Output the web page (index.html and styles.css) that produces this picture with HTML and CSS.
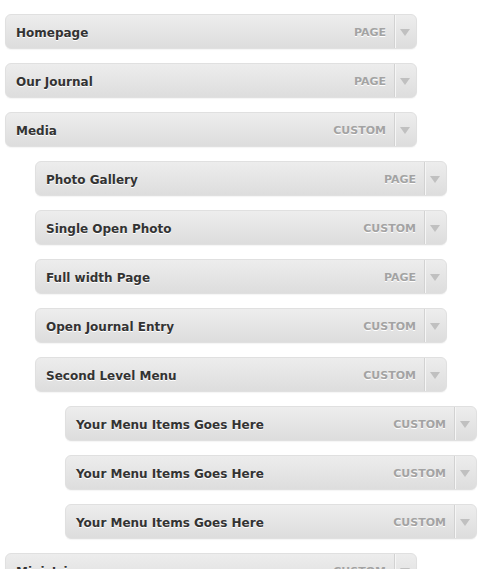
FILE: index.html
```html
<!DOCTYPE html>
<html>
<head>
<meta charset="utf-8">
<link rel="stylesheet" href="styles.css">
</head>
<body>
<ul class="menu">
  <li class="item d0"><span class="title">Homepage</span><span class="type">Page</span><span class="arrow"></span></li>
  <li class="item d0"><span class="title">Our Journal</span><span class="type">Page</span><span class="arrow"></span></li>
  <li class="item d0"><span class="title">Media</span><span class="type">Custom</span><span class="arrow"></span></li>
  <li class="item d1"><span class="title">Photo Gallery</span><span class="type">Page</span><span class="arrow"></span></li>
  <li class="item d1"><span class="title">Single Open Photo</span><span class="type">Custom</span><span class="arrow"></span></li>
  <li class="item d1"><span class="title">Full width Page</span><span class="type">Page</span><span class="arrow"></span></li>
  <li class="item d1"><span class="title">Open Journal Entry</span><span class="type">Custom</span><span class="arrow"></span></li>
  <li class="item d1"><span class="title">Second Level Menu</span><span class="type">Custom</span><span class="arrow"></span></li>
  <li class="item d2"><span class="title">Your Menu Items Goes Here</span><span class="type">Custom</span><span class="arrow"></span></li>
  <li class="item d2"><span class="title">Your Menu Items Goes Here</span><span class="type">Custom</span><span class="arrow"></span></li>
  <li class="item d2"><span class="title">Your Menu Items Goes Here</span><span class="type">Custom</span><span class="arrow"></span></li>
  <li class="item d0"><span class="title">Ministries</span><span class="type">Custom</span><span class="arrow"></span></li>
</ul>
</body>
</html>
```
FILE: styles.css
```css
html, body {
  margin: 0;
  padding: 0;
  background: #ffffff;
  overflow: hidden;
}
.menu {
  list-style: none;
  margin: 0;
  padding: 14px 0 0 5px;
  display: flex;
  flex-direction: column;
  gap: 14px;
  font-family: "DejaVu Sans", Verdana, sans-serif;
}
.item {
  box-sizing: border-box;
  width: 412px;
  height: 35px;
  display: flex;
  align-items: center;
  border: 1px solid #e0e0e0;
  border-radius: 6px;
  background: linear-gradient(to bottom, #ededed, #dddddd);
  box-shadow: 0 1px 1px rgba(0,0,0,0.04);
}
.d1 { margin-left: 30px; }
.d2 { margin-left: 60px; }
.title {
  flex: 1;
  padding-left: 10px;
  padding-top: 2px;
  font-size: 12px;
  font-weight: bold;
  color: #333333;
  text-shadow: 0 1px 0 #ffffff;
}
.type {
  font-size: 11px;
  font-weight: bold;
  text-transform: uppercase;
  color: #a3a3a3;
  text-shadow: 0 1px 0 #ffffff;
  padding-right: 8px;
  padding-top: 1px;
}
.arrow {
  align-self: stretch;
  width: 21px;
  border-left: 1px solid #d2d2d2;
  box-shadow: inset 1px 0 0 #f6f6f6;
  position: relative;
}
.arrow::after {
  content: "";
  position: absolute;
  left: 5px;
  top: 14px;
  border-left: 5px solid transparent;
  border-right: 5px solid transparent;
  border-top: 7px solid #c0c0c0;
}
```
